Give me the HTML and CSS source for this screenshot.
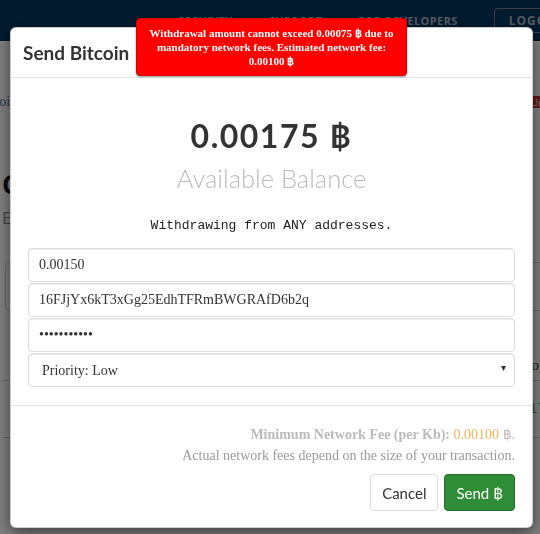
FILE: index.html
```html
<!DOCTYPE html>
<html>
<head>
	<meta charset="utf-8">
	<title>Wallet - Send Bitcoin</title>
	<link rel="stylesheet" href="styles.css">
</head>
<body>
	<header class="topbar">
		<nav class="topnav">
			<a href="#">SECURITY</a>
			<a href="#">SUPPORT</a>
			<a href="#">FOR DEVELOPERS</a>
			<button class="logout">LOGOUT</button>
		</nav>
	</header>

	<div class="page">
		<div class="crumbs">
			<a href="#">Coin wallets</a>
			<span class="badge">Unverified</span>
		</div>
		<h1 class="page-title">Coins</h1>
		<p class="page-sub">Every address in your wallet</p>
		<div class="address-box">
			<span class="dot">&middot;</span>
		</div>
		<div class="row">
			<span></span>
			<span class="copy">Copy</span>
		</div>
		<div class="row">
			<span></span>
			<span class="amount">0.0175</span>
		</div>
	</div>

	<div class="backdrop"></div>
	<div class="modal">
		<div class="modal-dialog">
			<div class="modal-header">
				<h4>Send Bitcoin</h4>
			</div>
			<div class="fee-alert">Withdrawal amount cannot exceed 0.00075 ฿ due to mandatory network fees. Estimated network fee: 0.00100 ฿</div>
			<div class="modal-body">
				<div class="balance">0.00175 ฿</div>
				<div class="balance-label">Available Balance</div>
				<p class="withdraw-note">Withdrawing from ANY addresses.</p>
				<form class="send-form">
					<input class="field" type="text" id="amount" value="0.00150">
					<input class="field" type="text" id="address" value="16FJjYx6kT3xGg25EdhTFRmBWGRAfD6b2q">
					<input class="field" type="password" id="password" value="secretpass1">
					<div class="select-wrap">
						<select class="field" id="priority">
							<option>Priority: Low</option>
							<option>Priority: Medium</option>
							<option>Priority: High</option>
						</select>
					</div>
				</form>
			</div>
			<div class="modal-footer">
				<p class="fee-line"><b>Minimum Network Fee (per Kb):</b> <span class="fee-value">0.00100</span> ฿.</p>
				<p class="fee-line fee-note">Actual network fees depend on the size of your transaction.</p>
				<div class="actions">
					<button type="button" class="btn btn-default">Cancel</button>
					<button type="button" class="btn btn-send">Send ฿</button>
				</div>
			</div>
		</div>
	</div>
</body>
</html>
```

FILE: styles.css
```css
html, body {
  height: 100%;
  overflow: hidden;
}

body {
  margin: 0;
  font-family: "Liberation Serif", serif;
  font-size: 14px;
  color: #333;
  background-color: #fff;
}

/* top bar behind the modal */
.topbar {
  background-color: #04365f;
  height: 41px;
  display: flex;
  align-items: center;
  padding-left: 178px;
  white-space: nowrap;
}

.topnav {
  display: flex;
  align-items: center;
  gap: 36px;
}

.topnav a {
  color: #aab6c2;
  font-family: "Open Sans", sans-serif;
  font-weight: bold;
  font-size: 11px;
  letter-spacing: 0.4px;
  text-decoration: none;
}

.logout {
  height: 25px;
  padding: 0 14px;
  background: none;
  border: 1px solid #6f7d8b;
  border-radius: 3px;
  color: #aab6c2;
  font-family: "Open Sans", sans-serif;
  font-weight: bold;
  font-size: 12px;
  letter-spacing: 1px;
}

/* page content behind the modal */
.page {
  padding: 0 0 0 2px;
}

.crumbs {
  display: flex;
  justify-content: space-between;
  align-items: center;
  margin-top: 51px;
  margin-right: -44px;
  line-height: 20px;
}

.crumbs a {
  color: #3a6fb0;
  text-decoration: none;
  margin-left: -12px;
}

.badge {
  background-color: #c9302c;
  color: #fff;
  font-size: 11px;
  line-height: 12px;
  padding: 0 6px;
}

.page-title {
  margin: 56px 0 0;
  font-family: "Open Sans", sans-serif;
  font-size: 26px;
  line-height: 32px;
  color: #111;
}

.page-sub {
  margin: 6px 0 0;
  font-family: "Open Sans", sans-serif;
  font-size: 17px;
  line-height: 24px;
  color: #888;
}

.address-box {
  margin: 32px -20px 0 3px;
  height: 47px;
  border: 1px solid #ccc;
  border-radius: 4px;
  display: flex;
  align-items: center;
  justify-content: flex-end;
  padding-right: 26px;
  color: #3a6fb0;
}

.row {
  display: flex;
  justify-content: space-between;
  align-items: center;
  margin-right: -14px;
  border-bottom: 1px solid #ccc;
}

.address-box + .row {
  height: 70px;
  align-items: flex-end;
  padding-bottom: 6px;
  box-sizing: border-box;
}

.address-box + .row + .row {
  height: 56px;
}

.copy {
  font-size: 15px;
}

.amount {
  color: #4a9a3a;
  font-family: "Liberation Mono", monospace;
  font-size: 14px;
}

/* modal */
.backdrop {
  position: fixed;
  top: 0;
  left: 0;
  right: 0;
  bottom: 0;
  background-color: rgba(0, 0, 0, 0.5);
}

.modal {
  position: fixed;
  top: 0;
  left: 0;
  right: 0;
  bottom: 0;
  padding: 27px 0 0 10px;
}

.modal-dialog {
  position: relative;
  box-sizing: border-box;
  width: 523px;
  background-color: #fff;
  border: 1px solid rgba(0, 0, 0, 0.2);
  border-radius: 6px;
  box-shadow: 0 5px 15px rgba(0, 0, 0, 0.5);
}

.modal-header {
  padding: 14px 12px;
  border-bottom: 1px solid #e5e5e5;
}

.modal-header h4 {
  margin: 0;
  font-family: Lato, sans-serif;
  font-weight: bold;
  font-size: 19px;
  line-height: 21px;
  color: #333;
}

.fee-alert {
  position: absolute;
  top: -10px;
  left: 125px;
  box-sizing: border-box;
  width: 271px;
  padding: 7px 10px;
  background-color: #ff0000;
  border: 1px solid #d40000;
  border-radius: 4px;
  box-shadow: 0 1px 2px rgba(0, 0, 0, 0.4);
  color: #fff;
  font-weight: bold;
  font-size: 11px;
  line-height: 14px;
  text-align: center;
}

.modal-body {
  padding: 20px 17px 18px;
  text-align: center;
}

.balance {
  margin-top: 18px;
  font-family: Lato, sans-serif;
  font-weight: bold;
  font-size: 32px;
  line-height: 40px;
  letter-spacing: 1.5px;
  color: #333;
}

.balance-label {
  margin-top: 7px;
  font-family: Lato, sans-serif;
  font-weight: 300;
  font-size: 25.5px;
  line-height: 30px;
  color: #bbb;
}

.withdraw-note {
  margin: 24px 0 0;
  font-family: "Liberation Mono", monospace;
  font-size: 13px;
  line-height: 18px;
  color: #222;
}

.send-form {
  margin-top: 13px;
  display: flex;
  flex-direction: column;
  gap: 1px;
}

.field {
  box-sizing: border-box;
  width: 100%;
  height: 34px;
  padding: 0 10px;
  border: 1px solid #ddd;
  border-radius: 4px;
  box-shadow: inset 0 1px 1px rgba(0, 0, 0, 0.075);
  background-color: #fff;
  font-family: "Liberation Serif", serif;
  font-size: 14px;
  color: #333;
  text-align: left;
}

.select-wrap {
  position: relative;
}

.select-wrap select {
  -webkit-appearance: none;
  appearance: none;
  padding-left: 13px;
}

.select-wrap::after {
  content: "\25BE";
  position: absolute;
  right: 9px;
  top: 9px;
  font-family: "DejaVu Sans", sans-serif;
  font-size: 10px;
  color: #333;
  pointer-events: none;
}

.modal-footer {
  padding: 18px 17px 16px;
  border-top: 1px solid #e5e5e5;
  text-align: right;
}

.fee-line {
  margin: 0;
  line-height: 21px;
  color: #bbb;
}

.fee-value {
  color: #f5b35a;
}

.fee-note {
  color: #999;
}

.actions {
  margin-top: 8px;
  display: flex;
  justify-content: flex-end;
  gap: 6px;
}

.btn {
  height: 37px;
  padding: 0 11px;
  border-radius: 4px;
  font-family: Lato, sans-serif;
  font-size: 15px;
  cursor: pointer;
}

.btn-default {
  background-color: #fff;
  border: 1px solid #ddd;
  color: #333;
}

.btn-send {
  background-color: #2f8c37;
  border: 1px solid #256b2a;
  color: #fff;
}
```
